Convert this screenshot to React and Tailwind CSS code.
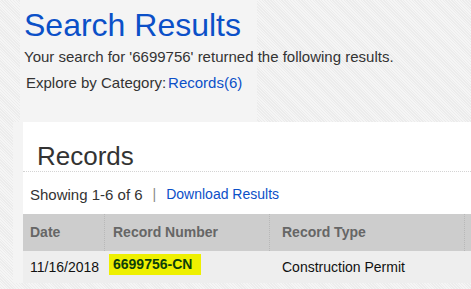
export default function App() {
  return (
    <div className="h-[289px] w-[471px] overflow-hidden bg-[#f1f1f1] font-['Liberation_Sans',Arial,sans-serif] bg-[repeating-linear-gradient(45deg,#f5f5f5_0px,#f5f5f5_1px,#ececec_1px,#ececec_2px)]">
      <div className="ml-[20px] h-[122px] w-[237px] bg-[#f4f4f4]">
        <div className="w-[380px] pl-[4px] pt-[7px]">
          <h1 className="text-[32px] leading-[36px] text-[#0b50c8]">Search Results</h1>
          <p className="mt-[5px] text-[15px] leading-[18px] text-[#333]">
            Your search for '6699756' returned the following results.
          </p>
          <p className="mt-[8px] flex pl-[2px] text-[15px] leading-[18px] text-[#333]">
            <span>Explore by Category:</span>
            <span className="ml-[2px] text-[#0b50c8]">Records(6)</span>
          </p>
        </div>
      </div>
      <div className="flex">
        <div className="w-[13px]" />
        <div className="w-[10px] bg-[#f4f4f4]" />
        <section className="flex-1 bg-white">
          <h2 className="pl-[14px] pt-[20px] text-[26px] leading-[29px] text-[#333]">Records</h2>
          <div className="border-b border-dotted border-[#d4d4d4]" />
          <div className="flex items-center pl-[7px] pt-[14px] leading-[17px] text-[#333]">
            <span className="text-[15px]">Showing 1-6 of 6</span>
            <span className="mx-[10px] text-[14px] text-[#888]">|</span>
            <span className="text-[14px] text-[#0b50c8]">Download Results</span>
          </div>
          <div className="mt-[11px] text-[14px]">
            <div className="flex h-[37px] items-center bg-[#cdcdcd] font-bold text-[#666]">
              <div className="flex h-full w-[82px] items-center border-r border-dotted border-[#b8b8b8] pl-[7px]">Date</div>
              <div className="flex h-full w-[165px] items-center border-r border-dotted border-[#b8b8b8] pl-[8px]">Record Number</div>
              <div className="flex h-full w-[195px] items-center border-r border-dotted border-[#b8b8b8] pl-[12px]">Record Type</div>
              <div className="h-full flex-1" />
            </div>
            <div className="flex h-[32px] items-center bg-[#eeeeee] text-[#111]">
              <div className="w-[82px] pl-[7px]">11/16/2018</div>
              <div className="flex w-[165px] items-center pl-[4px]">
                <span className="mb-[5px] bg-[#eef000] pb-[2px] pl-[4px] pr-[9px] pt-[2px] font-bold leading-[17px] text-[#0b3f0b]">6699756-CN</span>
              </div>
              <div className="pl-[12px]">Construction Permit</div>
            </div>
          </div>
        </section>
      </div>
    </div>
  );
}
